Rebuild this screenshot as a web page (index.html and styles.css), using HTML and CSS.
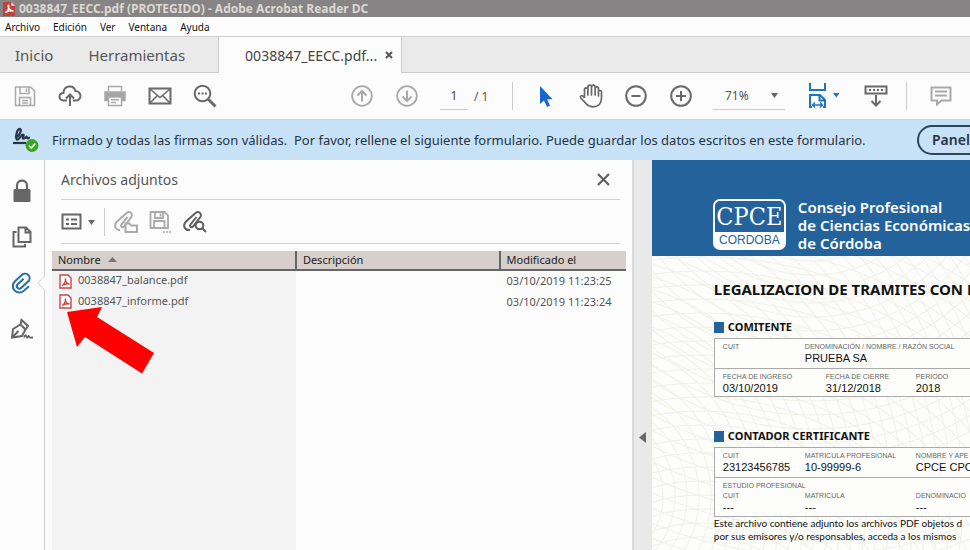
FILE: index.html
```html
<!DOCTYPE html>
<html lang="es">
<head>
<meta charset="utf-8">
<meta name="viewport" content="width=device-width, initial-scale=1">
<title>0038847_EECC.pdf</title>
<link rel="stylesheet" href="styles.css">
</head>
<body>
<div class="app">
  <header class="titlebar">
    <svg class="app-icon" width="12" height="14" viewBox="0 0 13 15"><path fill="#c4403a" d="M0 0h9l4 4v11H0z"/><path fill="#f3e6e3" d="M9 0v4h4z"/><path fill="none" stroke="#fff" stroke-width="1.5" d="M2.500 11.500C5 10 6.500 7 6.200 3.800 6 2.500 5 4 6 6c1 2 2.500 4 4.800 3.600C9.500 8.500 5 9.500 2.500 11.500z"/></svg>
    <span>0038847_EECC.pdf (PROTEGIDO) - Adobe Acrobat Reader DC</span>
  </header>
  <nav class="menubar" aria-label="Menú">
    <button type="button">Archivo</button>
    <button type="button">Edición</button>
    <button type="button">Ver</button>
    <button type="button">Ventana</button>
    <button type="button">Ayuda</button>
  </nav>
  <div class="tabs">
    <button class="tab" type="button">Inicio</button>
    <button class="tab tab-tools" type="button">Herramientas</button>
    <div class="tab-doc">
      <button class="tab-name" type="button">0038847_EECC.pdf...</button>
      <button class="tab-close" type="button" aria-label="Cerrar"><svg width="8" height="8" viewBox="0 0 8 8"><path fill="none" stroke="#555" stroke-width="2" d="M1 1l6 6M7 1L1 7"/></svg></button>
    </div>
    <div class="tab-rest"></div>
  </div>

  <div class="toolbar">
    <button class="tool pale" type="button" aria-label="Guardar"><svg width="22" height="22" viewBox="0 0 22 22"><path d="M1.500 2h15L20.500 6v14.500h-19zM6 2v6.500h9V2M12.500 3.500V7M5.500 20.500v-8h11v8M8 15.500h6M8 18h6"/></svg></button>
    <button class="tool" type="button" aria-label="Subir"><svg width="24" height="22" viewBox="0 0 24 22"><path stroke-width="2" d="M9 15.500H5.500C0 15 .500 8 5.500 8 6 0 15.500-.500 17.500 6c6 0 7 9 .500 9.500H15M12 21V10M8 13.500l4-4 4 4"/></svg></button>
    <button class="tool pale" type="button" aria-label="Imprimir"><svg width="24" height="22" viewBox="0 0 24 22"><path d="M5.500 6V1.500h13V6"/><path fill="#a5a5a5" d="M2 7h20v8.500h-3v-3.500H5v3.500H2z"/><path fill="#fff" d="M5.500 12h13v8.500h-13zM8 14.700h8M8 17.500h5"/></svg></button>
    <button class="tool" type="button" aria-label="Correo"><svg width="24" height="18" viewBox="0 0 24 18"><path stroke-width="2" d="M1.500 1.500h21v15h-21z"/><path stroke-width="1.500" d="M2 2l10 8.500L22 2M2 16l7.500-7.500M22 16l-7.500-7.500"/></svg></button>
    <button class="tool" type="button" aria-label="Buscar"><svg width="24" height="24" viewBox="0 0 24 24"><circle cx="9.500" cy="9.500" r="7.800" stroke-width="2"/><path stroke-width="3" d="M15.500 15.500l7 7"/><path stroke-width="2" stroke-dasharray="2 1.500" d="M5 9.500h9"/></svg></button>
    <button class="tool pale nav-first" type="button" aria-label="Página anterior"><svg width="22" height="22" viewBox="0 0 22 22"><circle cx="11" cy="11" r="9.800" stroke-width="1.800"/><path stroke-width="2" d="M11 16.500v-10M6.500 10.500L11 6l4.500 4.500"/></svg></button>
    <button class="tool pale" type="button" aria-label="Página siguiente"><svg width="22" height="22" viewBox="0 0 22 22"><circle cx="11" cy="11" r="9.800" stroke-width="1.800"/><path stroke-width="2" d="M11 5.500v10M6.500 11.500L11 16l4.500-4.500"/></svg></button>
    <input class="page-input" type="text" value="1" aria-label="Página">
    <span class="page-total">/ 1</span>
    <span class="rule"></span>
    <button class="tool" type="button" aria-label="Seleccionar"><svg width="14" height="21" viewBox="0 0 14 21"><path fill="#1767d2" stroke="none" d="M1 0v18l4-3.500 3 6.500 3-1.500-3-6.300h5.500z"/></svg></button>
    <button class="tool" type="button" aria-label="Mano"><svg width="24" height="24" viewBox="0 0 24 24"><path stroke-width="1.700" stroke-linejoin="round" d="M5.500 14V5.500c0-2.200 3.400-2.200 3.400 0V11 3c0-2.400 3.600-2.400 3.600 0v8V3c0-2.400 3.600-2.400 3.600 0v8V4.500c0-2.200 3.400-2.200 3.400 0V12 8c0-2 3-2 3 0v6c0 6-3.500 8.800-8.500 8.800-4.500 0-6.500-2-8.500-5L1.700 14c-1-2 1-3.200 2.300-1.800L5.500 14"/></svg></button>
    <button class="tool" type="button" aria-label="Alejar"><svg width="22" height="22" viewBox="0 0 22 22"><circle cx="11" cy="11" r="9.800" stroke-width="2"/><path stroke-width="2" d="M6.500 11h9"/></svg></button>
    <button class="tool" type="button" aria-label="Acercar"><svg width="22" height="22" viewBox="0 0 22 22"><circle cx="11" cy="11" r="9.800" stroke-width="2"/><path stroke-width="2" d="M6 11h10M11 6v10"/></svg></button>
    <div class="zoom">
      <select aria-label="Zoom"><option>71%</option></select>
      <svg width="7" height="5" viewBox="0 0 7 5"><path fill="#666" d="M0 0h7L3.500 5z"/></svg>
    </div>
    <button class="tool fit" type="button" aria-label="Ajustar ancho"><svg width="32" height="26" viewBox="0 0 32 26"><path stroke="#1e73be" stroke-width="2" d="M2 0v7h15V0M2 25V12h10l5 5v8M11.500 12v5.500H17M2 24h2M15 24h2"/><path stroke="#1e73be" stroke-width="1.500" d="M5 22h9M7 19.500L4.500 22 7 24.500M12 19.500l2.500 2.500-2.500 2.500"/><path fill="#1e73be" stroke="none" d="M25 10h6.500l-3.200 4.500z"/></svg></button>
    <button class="tool" type="button" aria-label="Barra de herramientas"><svg width="24" height="22" viewBox="0 0 24 22"><path stroke-width="2" d="M1.500 1.500h21v7h-21zM12 10v10M7.500 16l4.500 4.500 4.500-4.500"/><path stroke-width="2" stroke-dasharray="2 2" d="M5 5h15"/></svg></button>
    <span class="rule rule-last"></span>
    <button class="tool pale" type="button" aria-label="Comentar"><svg width="22" height="20" viewBox="0 0 22 20"><path stroke-width="2" d="M1.500 1.500h19v13h-9L7 18.500v-4H1.500zM5 5.500h12M5 9.500h12"/></svg></button>
  </div>

  <div class="banner">
    <svg class="sign-icon" width="28" height="26" viewBox="0 0 28 26"><path fill="none" stroke="#263548" stroke-width="2.200" d="M4 10.500C8 8 10 3 8 2 5 1 3 11 5 12.500c2 1 4-5 6-5s-2 5 1 4 2-3 3-1 2 0 3 0"/><path stroke="#263548" stroke-width="2.200" d="M1 16h13"/><circle cx="20" cy="18.500" r="6.500" fill="#3aa51f"/><path fill="none" stroke="#fff" stroke-width="1.600" d="M17 18.700l2.300 2.300 4-4.500"/></svg>
    <p>Firmado y todas las firmas son válidas.&nbsp; Por favor, rellene el siguiente formulario. Puede guardar los datos escritos en este formulario.</p>
    <button type="button">Panel</button>
  </div>

  <main class="work">
    <nav class="rail" aria-label="Paneles">
      <button type="button" aria-label="Seguridad"><svg width="18" height="24" viewBox="0 0 18 24"><path fill="none" stroke="#666" stroke-width="2.200" d="M4 11V6.500c0-6.500 10-6.500 10 0V11"/><rect x="0.500" y="10" width="17" height="13" rx="1.500" fill="#666"/></svg></button>
      <button type="button" aria-label="Páginas"><svg width="20" height="22" viewBox="0 0 20 22"><path fill="none" stroke="#666" stroke-width="2" d="M6.500 1.500H14l4.500 4.500v10h-12zM13.500 1.500v5h5M4.500 6h-3v14.500H13V18"/></svg></button>
      <button class="current" type="button" aria-label="Archivos adjuntos"><svg width="22" height="22" viewBox="0 0 22 22"><path fill="none" stroke="#256da5" stroke-width="2" transform="rotate(48 11 11)" d="M9 7v8a2.500 2.500 0 0 0 5 0V5.500a4.500 4.500 0 0 0-9 0V15a6.500 6.500 0 0 0 13 0V8"/></svg><svg class="notch" width="8" height="18" viewBox="0 0 8 18"><path fill="#fcfcfc" d="M8 0v18H7V0z"/><path fill="#fcfcfc" stroke="#d3d3d3" d="M7.500 0v2L1 9l6.500 7v2"/></svg></button>
      <button type="button" aria-label="Firmas"><svg width="24" height="22" viewBox="0 0 24 22"><path fill="none" stroke="#666" stroke-width="2" d="M2 19.500L3 11l7.500-4.500 5 5L12 18zM2 19.500l6.500-6.500M10.500 6.500L11.500 2l6.500 6-2.500 3.500"/><path fill="none" stroke="#666" stroke-width="1.800" d="M14 19.500c2-5 2-1 3 0s1-3 2-1 1 1 4 1"/></svg></button>
    </nav>

    <section class="panel">
      <div class="panel-head">
        <h2>Archivos adjuntos</h2>
        <button type="button" aria-label="Cerrar panel"><svg width="13" height="13" viewBox="0 0 13 13"><path fill="none" stroke="#606060" stroke-width="2.200" d="M1 1l11 11M12 1L1 12"/></svg></button>
      </div>
      <div class="panel-tools">
        <button type="button" aria-label="Opciones"><svg width="36" height="18" viewBox="0 0 36 18"><path fill="none" stroke="#666" stroke-width="2" d="M1.500 1.500h18v14h-18zM5 6.500h3M10 6.500h6M5 11h3M10 11h6"/><path fill="#666" d="M27 7h7l-3.500 5z"/></svg></button>
        <span class="panel-rule"></span>
        <button class="p-open" type="button" aria-label="Abrir adjunto"><svg width="25" height="24" viewBox="0 0 25 24"><path fill="none" stroke="#aaa" stroke-width="2" d="M14.500 7l-6 7.500c-1.500 2 1 3.500 2.500 2l7-9c3-4-2-7.500-5-4L3.500 12c-3 4.500-.500 8.500 3.500 8M12.500 13.500h4l1.500 2h6v6.500H12.500z"/></svg></button>
        <button class="p-save" type="button" aria-label="Guardar adjunto"><svg width="23" height="24" viewBox="0 0 23 24"><path fill="none" stroke="#aaa" stroke-width="1.800" d="M1.500 2h14L19 5.500V18H1.500zM6 2v6h8V2M5 18v-7h10.500v7M11.500 3.500v3"/><path stroke="#aaa" stroke-width="1.500" stroke-dasharray="2 1" d="M14 22h8"/></svg></button>
        <button type="button" aria-label="Buscar adjuntos"><svg width="25" height="24" viewBox="0 0 25 24"><path fill="none" stroke="#5e5e5e" stroke-width="2" d="M14.500 7l-6 7.500c-1.500 2 1 3.500 2.500 2l7-9c3-4-2-7.500-5-4L3.500 12c-3 4.500-.500 8.500 4.500 8M20.500 18.500l3.500 3.500"/><circle cx="17.500" cy="15.500" r="3.800" fill="#fcfcfc" stroke="#5e5e5e" stroke-width="2"/></svg></button>
      </div>
      <div class="files">
        <table>
          <thead>
            <tr><th class="c-name" scope="col">Nombre <svg width="9" height="5" viewBox="0 0 9 5"><path fill="#777" d="M0 5h9L4.500 0z"/></svg></th><th class="c-desc" scope="col">Descripción</th><th scope="col">Modificado el</th></tr>
          </thead>
          <tbody>
            <tr><td><svg class="pdf" width="13" height="15" viewBox="0 0 13 15"><path fill="#fff" stroke="#c4474a" stroke-width="1.400" d="M1 1h8l3 3v10H1z"/><path fill="none" stroke="#c4474a" stroke-width="1.300" d="M3 11.500c2-1 3.500-4 3.500-7 0 3 1.500 5.500 4 5.500-2-.500-5 0-7.500 1.500z"/></svg>0038847_balance.pdf</td><td></td><td>03/10/2019 11:23:25</td></tr>
            <tr><td><svg class="pdf" width="13" height="15" viewBox="0 0 13 15"><path fill="#fff" stroke="#c4474a" stroke-width="1.400" d="M1 1h8l3 3v10H1z"/><path fill="none" stroke="#c4474a" stroke-width="1.300" d="M3 11.500c2-1 3.500-4 3.500-7 0 3 1.500 5.500 4 5.500-2-.500-5 0-7.500 1.500z"/></svg>0038847_informe.pdf</td><td></td><td>03/10/2019 11:23:24</td></tr>
          </tbody>
        </table>
        <svg class="pointer" width="88" height="67" viewBox="0 0 88 67"><path fill="#f00" d="M0 5L35 0l-5 10 57 36-12 20.500L18 30 10 40z"/></svg>
      </div>
    </section>

    <button class="splitter" type="button" aria-label="Contraer panel"><svg width="7" height="11" viewBox="0 0 7 11"><path fill="#666" d="M7 0v11L0 5.500z"/></svg></button>

    <article class="page">
      <header class="page-head">
        <div class="logo"><span class="logo-top">CPCE</span><span class="logo-city">CORDOBA</span></div>
        <p>Consejo Profesional<br>de Ciencias Económicas<br>de Córdoba</p>
      </header>
      <div class="page-body">
        <h1>LEGALIZACION DE TRAMITES CON L</h1>
        <h2>COMITENTE</h2>
        <div class="box">
          <dl class="fields client">
            <div><dt>CUIT</dt></div>
            <div><dt>DENOMINACIÓN / NOMBRE / RAZÓN SOCIAL</dt><dd>PRUEBA SA</dd></div>
          </dl>
          <dl class="fields dates">
            <div><dt>FECHA DE INGRESO</dt><dd>03/10/2019</dd></div>
            <div><dt>FECHA DE CIERRE</dt><dd>31/12/2018</dd></div>
            <div><dt>PERIODO</dt><dd>2018</dd></div>
          </dl>
        </div>
        <h2 class="second">CONTADOR CERTIFICANTE</h2>
        <div class="box">
          <dl class="fields client">
            <div><dt>CUIT</dt><dd>23123456785</dd></div>
            <div><dt>MATRICULA PROFESIONAL</dt><dd>10-99999-6</dd></div>
            <div><dt>NOMBRE Y APE</dt><dd>CPCE CPC</dd></div>
          </dl>
          <div class="studio">
            <p>ESTUDIO PROFESIONAL</p>
            <dl class="fields client">
              <div><dt>CUIT</dt><dd>---</dd></div>
              <div><dt>MATRICULA</dt><dd>---</dd></div>
              <div><dt>DENOMINACIO</dt><dd>---</dd></div>
            </dl>
          </div>
        </div>
        <p class="note">Este archivo contiene adjunto los archivos PDF objetos d<br>por sus emisores y/o responsables, acceda a los mismos</p>
      </div>
    </article>
  </main>
</div>
</body>
</html>
```
FILE: styles.css
```css
* { box-sizing: border-box; }
html, body { height: 100%; }
body { margin: 0; overflow: hidden; font-family: "Noto Sans", sans-serif; color: #333; background: #fcfcfc; }
button { margin: 0; padding: 0; border: 0; background: none; font: inherit; color: inherit; }
h1, h2, p, dl, dd { margin: 0; }
svg { display: block; flex: none; }
.app { display: flex; flex-direction: column; height: 100%; white-space: nowrap; }

.titlebar { display: flex; align-items: center; gap: 4px; height: 17px; padding-left: 3px; flex: none; background: #868484; color: #dcd8d4; font-size: 12px; font-weight: 700; line-height: 16px; }
.menubar { display: flex; gap: 13px; height: 20px; padding-left: 5px; flex: none; background: #fdfdfd; border-bottom: 1px solid #d0d0d0; font-size: 10px; color: #111; }

.tabs { display: flex; height: 36px; flex: none; background: #eaeaea; color: #555; font-size: 15px; }
.tab { padding: 0 18px 0 15px; border-bottom: 1px solid #ccc; }
.tab-tools { padding: 0 33px 0 17px; border-right: 1px solid #ccc; }
.tab-doc { display: flex; align-items: center; gap: 8px; padding: 0 8px 0 26px; background: #fcfcfc; color: #444; }
.tab-name { font-size: 14px; }
.tab-rest { flex: 1; border-left: 1px solid #ccc; border-bottom: 1px solid #ccc; }

.toolbar { display: flex; align-items: center; height: 47px; padding-left: 2px; flex: none; background: #fcfcfc; border-bottom: 1px solid #c9d3da; color: #555; font-size: 12px; }
.tool { display: flex; align-items: center; justify-content: center; width: 45px; height: 44px; flex: none; }
.tool svg { fill: none; stroke: #696969; stroke-width: 1.5; }
.tool.pale svg { stroke: #a9a9a9; }
.nav-first { margin-left: 112px; }
.page-input { width: 28px; height: 28px; margin-left: 11px; padding: 0; border: 0; border-bottom: 1px solid #ccc; background: none; font: inherit; color: #444; text-align: center; }
.page-total { width: 32px; margin-left: 6px; }
.rule { width: 1px; height: 28px; margin: 0 10px 0 6px; background: #ccc; }
.zoom { display: flex; align-items: center; width: 72px; height: 28px; margin-left: 10px; padding-right: 7px; border-bottom: 1px solid #ccc; }
.zoom select { flex: 1; min-width: 0; height: 27px; padding: 0 0 0 12px; border: 0; appearance: none; background: none; font: inherit; color: #555; }
.tool.fit { width: 47px; margin-left: 15px; margin-right: 6px; }
.rule-last { margin: 0 11px 0 8px; }

.banner { display: flex; align-items: center; height: 40px; padding-left: 12px; flex: none; overflow: hidden; background: #c7e2f7; color: #263243; font-size: 13px; }
.banner p { width: 865px; margin-left: 12px; flex: none; }
.banner button { height: 30px; padding: 0 40px 0 13px; flex: none; border: 2px solid #2f4658; border-radius: 15px; font-size: 14px; font-weight: 600; line-height: 24px; }

.work { display: flex; flex: 1; min-height: 0; overflow: hidden; }
.rail { display: flex; flex-direction: column; align-items: center; width: 45px; padding-top: 8px; flex: none; border-right: 1px solid #ccc; }
.rail button { display: flex; align-items: center; justify-content: center; width: 44px; height: 46px; }
.rail .current { position: relative; }
.notch { position: absolute; right: -1px; top: 14px; }
.panel { display: flex; flex-direction: column; flex: 1; min-width: 0; padding: 0 6px 0 7px; }
.panel-head { display: flex; align-items: center; justify-content: space-between; height: 40px; margin: 0 6px 0 9px; padding-right: 10px; flex: none; border-bottom: 1px solid #d0d0d0; }
.panel-head h2 { font-size: 14px; font-weight: 400; color: #555; }
.panel-tools { display: flex; align-items: center; height: 44px; margin: 0 6px 7px 9px; flex: none; border-bottom: 1px solid #d0d0d0; }
.panel-rule { width: 1px; height: 28px; margin-left: 7px; background: #ccc; }
.p-open { margin: 0 11px 0 8px; }
.p-save { margin-right: 10px; }
.files { position: relative; flex: 1; background: linear-gradient(to right, #f3f3f3 0 42.5%, #fcfcfc 42.5%); }
.pointer { position: absolute; left: 15px; top: 56px; }
table { width: 100%; table-layout: fixed; border-collapse: collapse; color: #555; font-size: 11px; line-height: 14px; }
th { height: 19px; padding: 0 0 0 6px; border-bottom: 2px solid #666; background: #d6cfcb; color: #222; font-weight: 400; text-align: left; }
th + th { border-left: 2px solid #666; }
th svg { display: inline-block; margin: 0 0 2px 5px; }
.c-name { width: 42.5%; }
.c-desc { width: 35.5%; }
td { height: 21px; padding: 0 0 0 7px; }
.pdf { display: inline-block; margin-right: 6px; vertical-align: middle; }

.splitter { display: flex; align-items: center; justify-content: center; width: 20px; padding-top: 164px; flex: none; border-left: 2px solid #d9d9d9; background: #e9e9e9; }
.page { width: 32.8%; flex: none; overflow: hidden; background: #fdfdfb; }
.page-head { display: flex; align-items: center; gap: 12px; height: 96px; padding: 33px 0 0 61px; background: #24629b; color: #fff; font-size: 15px; font-weight: 600; line-height: 18px; }
.logo { display: flex; flex-direction: column; width: 73px; height: 51px; flex: none; border: 2px solid #fff; border-radius: 7px; background: #24629b; text-align: center; }
.logo-top { height: 31px; font-family: "DejaVu Serif Condensed", "DejaVu Serif", serif; font-size: 25px; font-weight: 400; line-height: 31px; }
.logo-city { flex: 1; background: #fff; color: #24629b; font-family: "Liberation Sans", sans-serif; font-size: 12px; font-weight: 400; line-height: 16px; }
.page-body { height: 100%; padding: 24px 0 0 62px; color: #111; background:
  repeating-radial-gradient(circle at -60px 240px, transparent 0 10px, #f0f0e9 11px, transparent 12px),
  repeating-radial-gradient(circle at 50px 420px, transparent 0 12px, #f0f0e9 13px, transparent 14px),
  repeating-radial-gradient(circle at 160px -120px, transparent 0 12px, #f0f0e9 13px, transparent 14px); }
.page-body h1 { font-size: 15px; font-weight: 700; line-height: 18px; }
.page-body h2 { display: flex; align-items: center; gap: 4px; height: 14px; margin: 22px 0 4px; font-size: 11px; font-weight: 700; line-height: 14px; }
.page-body h2::before { content: ""; width: 10px; height: 11px; background: #24629b; }
.page-body h2.second { margin-top: 32px; }
.box { border: 1px solid #aaa; border-right: 0; background: #fdfdfb; }
.fields { display: grid; padding: 3px 0 0 8px; }
.client { grid-template-columns: 82px 111px 90px; height: 29px; }
.dates { grid-template-columns: 103px 90px 90px; height: 28px; border-top: 1px solid #aaa; }
dt, .studio p { font-family: "Liberation Sans", sans-serif; font-size: 7px; line-height: 10px; color: #666; }
dd { font-family: "Liberation Sans", sans-serif; font-size: 11px; line-height: 12px; }
.studio { height: 39px; border-top: 1px solid #aaa; }
.studio p { padding: 3px 0 0 8px; }
.studio .fields { padding-top: 0; }
.note { font-family: Lato, sans-serif; font-size: 10px; line-height: 13px; }
```
